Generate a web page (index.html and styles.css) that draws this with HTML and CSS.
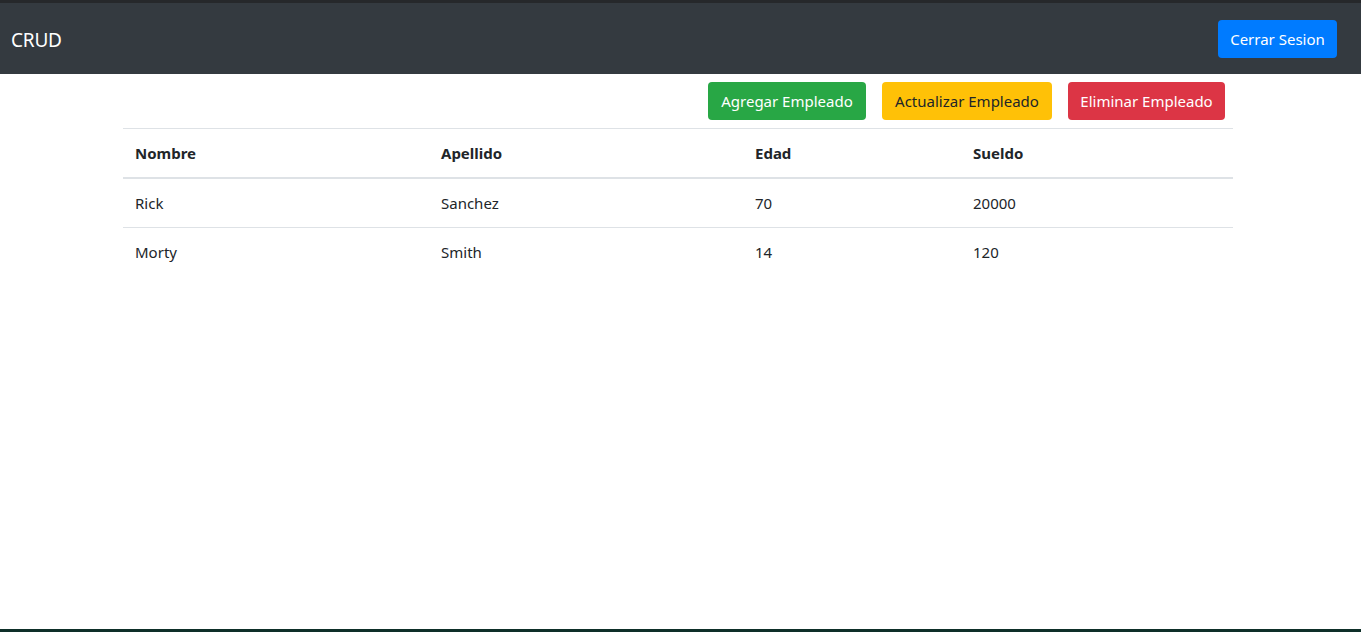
FILE: index.html
```html
<!DOCTYPE html>
<html lang="es">
<head>
<meta charset="utf-8">
<title>CRUD</title>
<link rel="stylesheet" href="styles.css">
</head>
<body>
<div class="page">
  <div class="topstrip"></div>
  <nav class="navbar">
    <span class="brand">CRUD</span>
    <button class="btn btn-blue">Cerrar Sesion</button>
  </nav>
  <main class="container">
    <div class="actions">
      <button class="btn btn-green">Agregar Empleado</button>
      <button class="btn btn-yellow">Actualizar Empleado</button>
      <button class="btn btn-red">Eliminar Empleado</button>
    </div>
    <table class="table">
      <colgroup>
        <col class="c1"><col class="c2"><col class="c3"><col class="c4">
      </colgroup>
      <thead>
        <tr><th>Nombre</th><th>Apellido</th><th>Edad</th><th>Sueldo</th></tr>
      </thead>
      <tbody>
        <tr><td>Rick</td><td>Sanchez</td><td>70</td><td>20000</td></tr>
        <tr><td>Morty</td><td>Smith</td><td>14</td><td>120</td></tr>
      </tbody>
    </table>
  </main>
  <div class="spacer"></div>
  <div class="bottomstrip"></div>
</div>
</body>
</html>
```

FILE: styles.css
```css
* { box-sizing: border-box; }
html, body { margin: 0; padding: 0; height: 100%; }
body {
  font-family: "Noto Sans", "Open Sans", sans-serif;
  font-size: 16px;
  color: #212529;
  background: #fff;
}
.page {
  display: flex;
  flex-direction: column;
  height: 632px;
}
.topstrip { height: 3px; background: #26282b; }
.navbar {
  height: 71px;
  background: #343a40;
  display: flex;
  align-items: center;
  justify-content: space-between;
  padding: 0 24px 0 11px;
}
.brand {
  color: #fff;
  font-size: 19px;
  letter-spacing: -0.2px;
  margin-top: 2px;
}
.btn {
  font-family: inherit;
  font-size: 15px;
  letter-spacing: 0;
  height: 38px;
  border: none;
  border-radius: 4px;
  padding: 0 12px;
  color: #fff;
  cursor: pointer;
}
.btn-blue { background: #007bff; width: 119px; }
.btn-green { background: #28a745; width: 158px; }
.btn-yellow { background: #ffc107; color: #212529; width: 170px; }
.btn-red { background: #dc3545; width: 157px; }
.container {
  width: 1110px;
  margin-left: 123px;
}
.actions {
  display: flex;
  justify-content: flex-end;
  gap: 16px;
  padding: 8px 8px 8px 0;
}
.table {
  width: 100%;
  border-collapse: separate;
  border-spacing: 0;
}
.c1 { width: 306px; }
.c2 { width: 314px; }
.c3 { width: 218px; }
.c4 { width: 272px; }
.table th, .table td {
  text-align: left;
  vertical-align: middle;
  padding: 0 12px;
  font-size: 15px;
  letter-spacing: 0;
}
.table th {
  font-weight: 700;
  height: 51px;
  border-top: 1px solid #dee2e6;
  border-bottom: 2px solid #dee2e6;
}
.table td {
  height: 49px;
  border-top: 1px solid #dee2e6;
}
.table tbody tr:first-child td {
  height: 48px;
  border-top: 0;
}
.spacer { flex: 1; }
.bottomstrip { height: 3px; background: #0e2f29; }
```
